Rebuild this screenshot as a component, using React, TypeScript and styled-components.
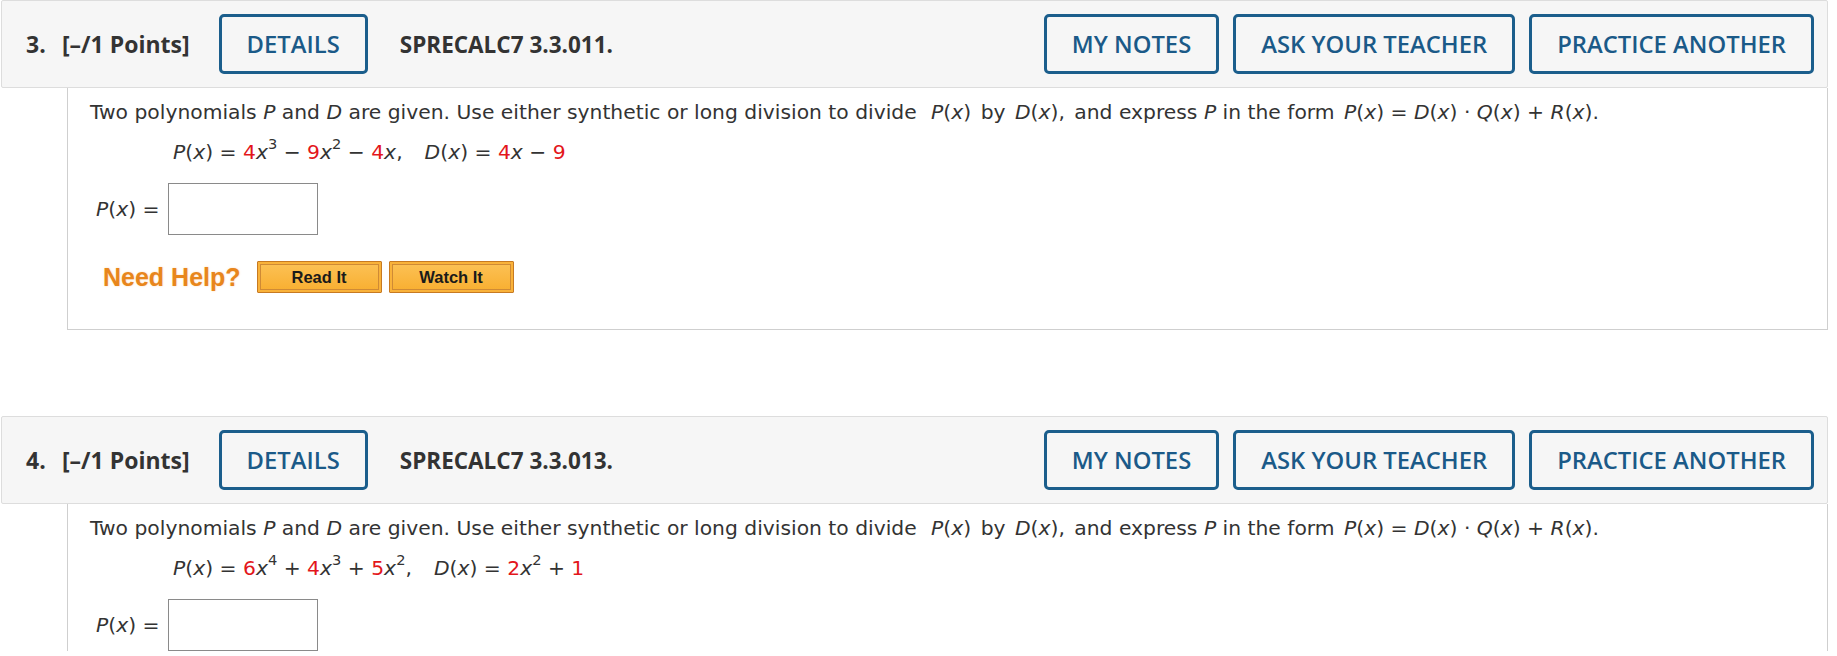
import React from "react";
import styled, { createGlobalStyle } from "styled-components";

const GlobalStyle = createGlobalStyle`
  html, body { margin: 0; padding: 0; background: #ffffff; }
  body { font-family: "DejaVu Sans", Verdana, sans-serif; }
`;

const Page = styled.div`
  padding: 0 9px 0 1px;
`;

const Question = styled.section<{ $last?: boolean }>`
  margin-bottom: ${(p) => (p.$last ? "0" : "86px")};
`;

const Header = styled.div`
  display: flex;
  align-items: center;
  box-sizing: border-box;
  height: 88px;
  padding: 0 13px 0 24px;
  background: #f6f6f6;
  border: 1px solid #dddddd;
  border-radius: 2px;
  font-family: "Open Sans", sans-serif;
`;

const Number = styled.span`
  font-weight: 700;
  font-size: 23px;
  color: #333333;
  width: 36px;
`;

const Points = styled.span`
  font-weight: 700;
  font-size: 23px;
  color: #333333;
`;

const Code = styled.span`
  font-weight: 700;
  font-size: 22.5px;
  color: #333333;
  margin-left: 32px;
`;

const Spacer = styled.div`
  flex: 1;
`;

const HeaderButtons = styled.div`
  display: flex;
  gap: 14px;
`;

const OutlineButton = styled.button<{ $ml?: number }>`
  box-sizing: border-box;
  height: 60px;
  padding: 0 25px;
  margin-left: ${(p) => p.$ml ?? 0}px;
  background: transparent;
  border: 3px solid #1b5e8c;
  border-radius: 5px;
  color: #1b5a88;
  font-family: "Open Sans", sans-serif;
  font-size: 23.8px;
  font-weight: 600;
  cursor: pointer;
`;

const Body = styled.div<{ $open?: boolean }>`
  margin-left: 66px;
  background: #ffffff;
  border: 1px solid #cfcfcf;
  border-top: none;
  ${(p) => (p.$open ? "border-bottom: none;" : "")}
  padding: 8px 22px ${(p) => (p.$open ? "0" : "36px")};
  color: #333333;
  font-family: "DejaVu Sans", Verdana, sans-serif;
  font-size: 20.3px;
`;

const Prompt = styled.p`
  margin: 0;
  line-height: 32px;
  white-space: nowrap;
`;

const Formula = styled.p`
  margin: 8px 0 0 83px;
  line-height: 32px;
  white-space: nowrap;
`;

const Var = styled.i`
  font-style: italic;
`;

const Coef = styled.span`
  color: #e3161b;
`;

const Sup = styled.sup`
  font-size: 0.72em;
  vertical-align: 0;
  position: relative;
  top: -0.68em;
`;

const Gap = styled.span<{ $w: number }>`
  display: inline-block;
  width: ${(p) => p.$w}px;
`;

const AnswerRow = styled.div`
  display: flex;
  align-items: center;
  gap: 8px;
  margin: 13px 0 0 6px;
`;

const AnswerLabel = styled.span`
  white-space: nowrap;
`;

const AnswerBox = styled.input`
  box-sizing: border-box;
  width: 150px;
  height: 52px;
  border: 1px solid #8a8a8a;
  background: #ffffff;
  margin: 0;
`;

const HelpRow = styled.div`
  display: flex;
  align-items: center;
  margin: 26px 0 0 13px;
`;

const NeedHelp = styled.span`
  font-family: "Liberation Sans", Arial, sans-serif;
  font-weight: 700;
  font-size: 25px;
  color: #e8861c;
  text-shadow: 0 0 2px rgba(248, 190, 120, 0.6);
  margin-right: 16px;
`;

const HelpButton = styled.button`
  box-sizing: border-box;
  width: 125px;
  height: 32px;
  margin-right: 7px;
  padding: 0;
  border: 1px solid #c77a22;
  background: linear-gradient(#fcc257, #f8ae2f);
  box-shadow: inset 0 0 0 2px #f9b23a, inset 0 0 0 3px #cf8a35;
  border-radius: 1px;
  font-family: "Liberation Sans", Arial, sans-serif;
  font-weight: 700;
  font-size: 16.5px;
  color: #1a1a1a;
  cursor: pointer;
`;

type Term = { c: string; v?: string; e?: string; op?: string };

const Poly: React.FC<{ terms: Term[] }> = ({ terms }) => (
  <>
    {terms.map((t, i) => (
      <React.Fragment key={i}>
        {t.op ? ` ${t.op} ` : null}
        <Coef>{t.c}</Coef>
        {t.v ? <Var>{t.v}</Var> : null}
        {t.e ? <Sup>{t.e}</Sup> : null}
      </React.Fragment>
    ))}
  </>
);

const PromptText = () => (
  <Prompt>
    Two polynomials <Var>P</Var> and <Var>D</Var> are given. Use either synthetic or long division to divide
    <Gap $w={8} /> <Var>P</Var>(<Var>x</Var>) <Gap $w={3} />by <Gap $w={3} /><Var>D</Var>(<Var>x</Var>),<Gap $w={3} /> and express{" "}
    <Var>P</Var> in the form <Gap $w={3} /><Var>P</Var>(<Var>x</Var>) = <Var>D</Var>(<Var>x</Var>) · <Var>Q</Var>(
    <Var>x</Var>) + <Var>R</Var>(<Var>x</Var>).
  </Prompt>
);

type Q = {
  num: string;
  code: string;
  p: Term[];
  d: Term[];
  help?: boolean;
};

const questions: Q[] = [
  {
    num: "3.",
    code: "SPRECALC7 3.3.011.",
    p: [
      { c: "4", v: "x", e: "3" },
      { op: "−", c: "9", v: "x", e: "2" },
      { op: "−", c: "4", v: "x" },
    ],
    d: [{ c: "4", v: "x" }, { op: "−", c: "9" }],
    help: true,
  },
  {
    num: "4.",
    code: "SPRECALC7 3.3.013.",
    p: [
      { c: "6", v: "x", e: "4" },
      { op: "+", c: "4", v: "x", e: "3" },
      { op: "+", c: "5", v: "x", e: "2" },
    ],
    d: [{ c: "2", v: "x", e: "2" }, { op: "+", c: "1" }],
  },
];

export default function App() {
  return (
    <Page>
      <GlobalStyle />
      {questions.map((q, i) => (
        <Question key={q.num} $last={i === questions.length - 1}>
          <Header>
            <Number>{q.num}</Number>
            <Points>[–/1 Points]</Points>
            <OutlineButton $ml={29}>DETAILS</OutlineButton>
            <Code>{q.code}</Code>
            <Spacer />
            <HeaderButtons>
              <OutlineButton>MY NOTES</OutlineButton>
              <OutlineButton>ASK YOUR TEACHER</OutlineButton>
              <OutlineButton>PRACTICE ANOTHER</OutlineButton>
            </HeaderButtons>
          </Header>
          <Body $open={!q.help}>
            <PromptText />
            <Formula>
              <Var>P</Var>(<Var>x</Var>) = <Poly terms={q.p} />,<Gap $w={22} />
              <Var>D</Var>(<Var>x</Var>) = <Poly terms={q.d} />
            </Formula>
            <AnswerRow>
              <AnswerLabel>
                <Var>P</Var>(<Var>x</Var>) =
              </AnswerLabel>
              <AnswerBox type="text" aria-label="P(x)" />
            </AnswerRow>
            {q.help ? (
              <HelpRow>
                <NeedHelp>Need Help?</NeedHelp>
                <HelpButton>Read It</HelpButton>
                <HelpButton>Watch It</HelpButton>
              </HelpRow>
            ) : null}
          </Body>
        </Question>
      ))}
    </Page>
  );
}
